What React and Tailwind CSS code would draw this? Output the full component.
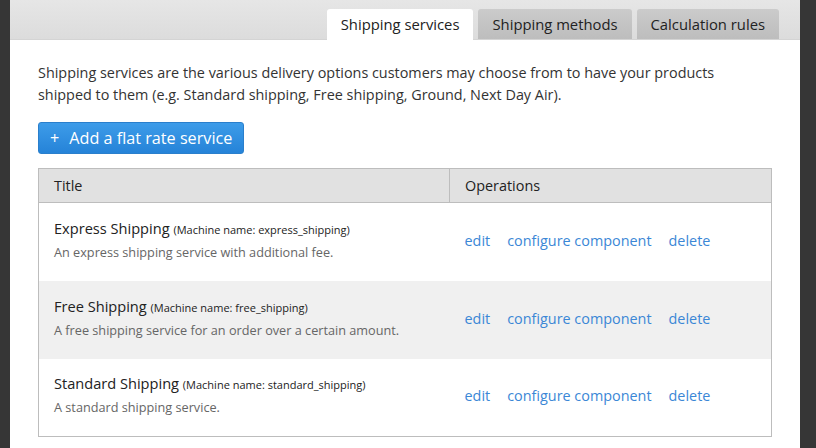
const TABS = [
  { id: 'services', label: 'Shipping services', active: true },
  { id: 'methods', label: 'Shipping methods' },
  { id: 'rules', label: 'Calculation rules' },
]

const SERVICES = [
  {
    title: 'Express Shipping',
    machine: 'express_shipping',
    description: 'An express shipping service with additional fee.',
  },
  {
    title: 'Free Shipping',
    machine: 'free_shipping',
    description: 'A free shipping service for an order over a certain amount.',
  },
  {
    title: 'Standard Shipping',
    machine: 'standard_shipping',
    description: 'A standard shipping service.',
  },
]

export default function App() {
  return (
    <div
      className="h-[448px] w-[816px] overflow-hidden bg-[#363636] pl-[10px] pr-[16px]"
      style={{ fontFamily: '"Open Sans", "Noto Sans", sans-serif' }}
    >
      <div className="h-full bg-white">
        {/* tab bar */}
        <div className="flex h-[40px] items-end justify-end gap-[5px] border-b border-[#d4d4d4] bg-gradient-to-b from-[#e6e6e6] to-[#dcdcdc] pr-[21px]">
          {TABS.map((tab) => (
            <div
              key={tab.id}
              className={
                tab.active
                  ? 'relative -mb-px flex h-[31px] items-center rounded-t-[3px] bg-white px-[14px] text-[14.8px] text-[#222]'
                  : 'flex h-[30px] items-center rounded-t-[3px] bg-gradient-to-b from-[#cbcbcb] to-[#bdbdbd] px-[14px] text-[14.8px] text-[#222]'
              }
            >
              {tab.label}
            </div>
          ))}
        </div>

        <div className="px-[28px] pt-[22px]">
          <p className="text-[14.4px] leading-[22px] text-[#333]">
            Shipping services are the various delivery options customers may choose from to have your products
            <br />
            shipped to them (e.g. Standard shipping, Free shipping, Ground, Next Day Air).
          </p>

          <button className="mt-[16px] flex h-[32px] w-[206px] items-center rounded-[3px] border border-[#2a7fcc] bg-gradient-to-b from-[#3d9ce9] to-[#2583d8] pl-[11px] text-[16.2px] text-white">
            <span className="mr-[10px]">+</span>Add a flat rate service
          </button>

          <table className="mt-[14px] w-[734px] border-collapse border border-[#bdbdbd] text-left">
            <thead>
              <tr className="h-[34px] bg-[#e1e1e1]">
                <th className="border-b border-[#bdbdbd] pl-[15px] text-[14.4px] font-normal text-[#222]">Title</th>
                <th className="w-[322px] border-b border-l border-[#bdbdbd] pl-[15px] text-[14.4px] font-normal text-[#222]">
                  Operations
                </th>
              </tr>
            </thead>
            <tbody>
              {SERVICES.map((s, i) => (
                <tr key={s.machine} className={i % 2 === 1 ? 'h-[78px] bg-[#f0f0f0]' : 'h-[78px] bg-white'}>
                  <td className="pb-[4px] pl-[15px] align-middle">
                    <div className="text-[14.6px] leading-[22px] text-[#222]">
                      {s.title} <span className="text-[11px]">(Machine name: {s.machine})</span>
                    </div>
                    <div className="text-[12.7px] leading-[22px] text-[#666]">{s.description}</div>
                  </td>
                  <td className="pl-[15px] align-middle">
                    <div className="flex gap-[17px] pb-[2px] text-[14.4px] text-[#3b87d6]">
                      <a>edit</a>
                      <a>configure component</a>
                      <a>delete</a>
                    </div>
                  </td>
                </tr>
              ))}
            </tbody>
          </table>
        </div>
      </div>
    </div>
  )
}
